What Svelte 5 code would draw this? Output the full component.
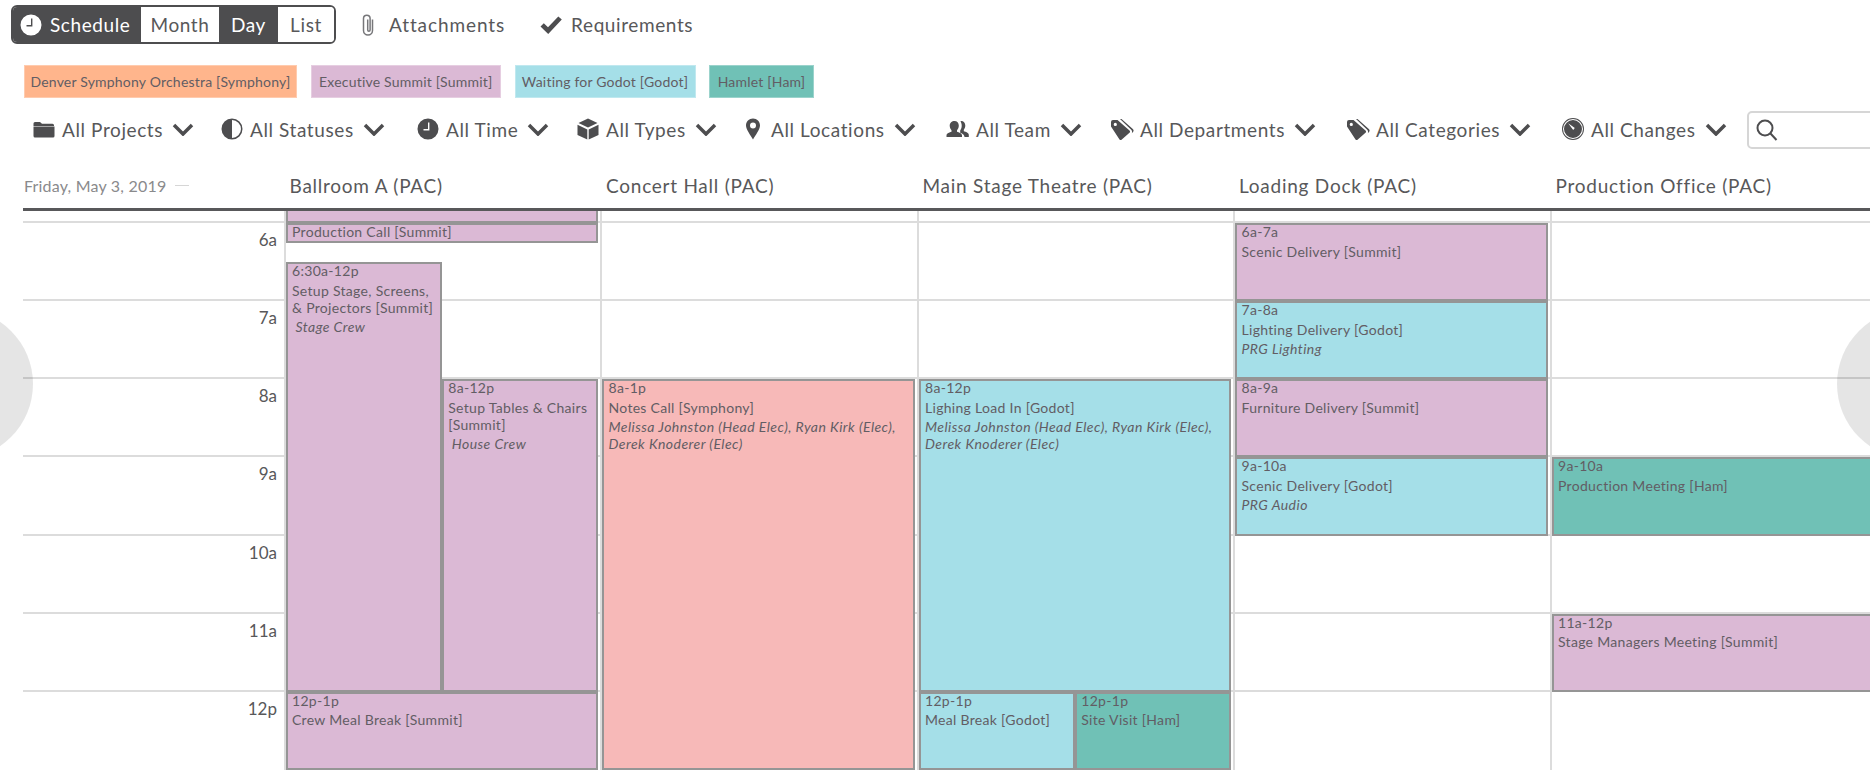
<script>
  const ICONS = {
    clock: 'M12 1.5a10.5 10.5 0 1 0 0 21 10.5 10.5 0 0 0 0-21z M12 5.5h1.4v7.9H7.5V12H12z',
    half: 'M12 1.5a10.5 10.5 0 1 0 0 21 10.5 10.5 0 0 0 0-21z M12 3a9 9 0 0 1 0 18z',
    folder: 'M1.500 6.500q0-1.500 1.500-1.500h5l2 1.800h10.500q1.500 0 1.500 1.500v.7H1.500z M1.500 9.500h21V19q0 1.500-1.500 1.500H3q-1.500 0-1.500-1.500z',
    cube: 'M12 1.500 21.500 6 12 10.500 2.500 6z M1.500 7.800l9.800 4.600v10.100L1.500 18z M22.500 7.800l-9.800 4.600v10.100l9.800-4.500z',
    pin: 'M12 1.500c-4 0-7 3-7 7 0 4 4.500 9.500 7 14 2.500-4.500 7-10 7-14 0-4-3-7-7-7z M12 5.500a3 3 0 1 1 0 6 3 3 0 0 1 0-6z',
    team: 'M8.500 4c2.600 0 4.300 2 4.300 4.600 0 2-.8 3.600-1.800 4.600v1.600c2 .8 5 1.500 5 3.700V20H.5v-1.500c0-2.200 3-2.900 5-3.700v-1.600c-1-1-1.800-2.600-1.800-4.600C3.700 6 5.900 4 8.500 4z M14.500 4.200c2.500-.6 4.800 1.400 4.800 4.400 0 1.700-.6 3.100-1.500 4.100v1.600c2 .7 5 1.300 5 3.600V20h-4.300c0-2.600-2.500-3.600-4.300-4.300v-2.200c1-1.300 1.500-3 1.500-4.900 0-1.800-.6-3.300-1.200-4.400z',
    tags: 'M1 9.500V5q0-2 2-2h4.500l12 10.500q1.200 1.200 0 2.300L11.800 22.500q-1.200 1-2.300 0z M5.300 5.800a1.600 1.600 0 1 0 0 3.200 1.600 1.600 0 0 0 0-3.200z M10 2h1.500l11.300 10q1.500 1.500.2 3l-1.200 1.200q.8-2-.6-3.400z',
    changes: 'M12 1a11 11 0 1 0 0 22 11 11 0 0 0 0-22z M12 2a10 10 0 1 1 0 20 10 10 0 0 1 0-20z M12 3a9 9 0 1 0 0 18 9 9 0 0 0 0-18z M7.200 6.200l6.600 4.800-1.600 1.900z',
    check: 'M1.500 13.500l3.300-3.300 4.200 4L19.300 3.500l3.500 3L9.200 21z'
  };

  const filters = [
    { icon: 'folder', label: 'All Projects' },
    { icon: 'half', label: 'All Statuses' },
    { icon: 'clock', label: 'All Time' },
    { icon: 'cube', label: 'All Types' },
    { icon: 'pin', label: 'All Locations' },
    { icon: 'team', label: 'All Team' },
    { icon: 'tags', label: 'All Departments' },
    { icon: 'tags', label: 'All Categories' },
    { icon: 'changes', label: 'All Changes' }
  ];

  const chips = [
    { label: 'Denver Symphony Orchestra [Symphony]', cls: 'orange' },
    { label: 'Executive Summit [Summit]', cls: 'summit' },
    { label: 'Waiting for Godot [Godot]', cls: 'godot' },
    { label: 'Hamlet [Ham]', cls: 'ham' }
  ];

  const hours = ['6a', '7a', '8a', '9a', '10a', '11a', '12p'];
  const HOUR = 78.15;
  const ORIGIN = 12;

  const columns = [
    {
      name: 'Ballroom A (PAC)',
      events: [
        { start: 5, dur: 1, cls: 'summit' },
        { start: 6, dur: 0.25, cls: 'summit', title: 'Production Call [Summit]' },
        { start: 6.5, dur: 5.5, cls: 'summit', lane: 0, lanes: 2, time: '6:30a-12p', title: 'Setup Stage, Screens, & Projectors [Summit]', crew: 'Stage Crew', indent: true },
        { start: 8, dur: 4, cls: 'summit', lane: 1, lanes: 2, time: '8a-12p', title: 'Setup Tables & Chairs [Summit]', crew: 'House Crew', indent: true },
        { start: 12, dur: 1, cls: 'summit', time: '12p-1p', title: 'Crew Meal Break [Summit]' }
      ]
    },
    {
      name: 'Concert Hall (PAC)',
      events: [
        { start: 8, dur: 5, cls: 'pink', time: '8a-1p', title: 'Notes Call [Symphony]', crew: 'Melissa Johnston (Head Elec), Ryan Kirk (Elec), Derek Knoderer (Elec)' }
      ]
    },
    {
      name: 'Main Stage Theatre (PAC)',
      events: [
        { start: 8, dur: 4, cls: 'godot', time: '8a-12p', title: 'Lighing Load In [Godot]', crew: 'Melissa Johnston (Head Elec), Ryan Kirk (Elec), Derek Knoderer (Elec)' },
        { start: 12, dur: 1, cls: 'godot', lane: 0, lanes: 2, time: '12p-1p', title: 'Meal Break [Godot]' },
        { start: 12, dur: 1, cls: 'ham', lane: 1, lanes: 2, time: '12p-1p', title: 'Site Visit [Ham]' }
      ]
    },
    {
      name: 'Loading Dock (PAC)',
      events: [
        { start: 6, dur: 1, cls: 'summit', time: '6a-7a', title: 'Scenic Delivery [Summit]' },
        { start: 7, dur: 1, cls: 'godot', time: '7a-8a', title: 'Lighting Delivery [Godot]', crew: 'PRG Lighting' },
        { start: 8, dur: 1, cls: 'summit', time: '8a-9a', title: 'Furniture Delivery [Summit]' },
        { start: 9, dur: 1, cls: 'godot', time: '9a-10a', title: 'Scenic Delivery [Godot]', crew: 'PRG Audio' }
      ]
    },
    {
      name: 'Production Office (PAC)',
      events: [
        { start: 9, dur: 1, cls: 'ham', time: '9a-10a', title: 'Production Meeting [Ham]' },
        { start: 11, dur: 1, cls: 'summit', time: '11a-12p', title: 'Stage Managers Meeting [Summit]' }
      ]
    }
  ];

  function place(ev) {
    const lanes = ev.lanes ?? 1;
    const lane = ev.lane ?? 0;
    return `top:${ORIGIN + (ev.start - 6) * HOUR}px;height:${ev.dur * HOUR}px;left:${(lane / lanes) * 100}%;width:${100 / lanes}%`;
  }
</script>

{#snippet icon(name)}
  <svg class="icon" viewBox="0 0 24 24" aria-hidden="true"><path d={ICONS[name]} fill-rule="evenodd" /></svg>
{/snippet}

<div class="page">
  <div class="toolbar">
    <div class="segments">
      <button class="seg dark schedule"><svg class="icon white" viewBox="0 0 24 24"><path d={ICONS.clock} fill-rule="evenodd" /></svg>Schedule</button>
      <button class="seg month">Month</button>
      <button class="seg dark day">Day</button>
      <button class="seg list">List</button>
    </div>
    <div class="tool attachments">
      <svg class="icon line thin" viewBox="0 0 24 24"><path d="M16.500 6.500v11a4.500 4.500 0 0 1-9 0V5.500a3.300 3.300 0 0 1 6.600 0V17a1.200 1.200 0 0 1-2.400 0V6.500" /></svg>
      Attachments
    </div>
    <div class="tool requirements">
      {@render icon('check')}
      Requirements
    </div>
  </div>

  <div class="legend">
    {#each chips as chip}
      <span class="chip {chip.cls}">{chip.label}</span>
    {/each}
  </div>

  <div class="filters">
    {#each filters as f}
      <div class="filter">
        {@render icon(f.icon)}
        <span>{f.label}</span>
        <svg class="chev" viewBox="0 0 22 13"><path d="M2 2l9 9 9-9" /></svg>
      </div>
    {/each}
    <div class="search">
      <svg class="icon line" viewBox="0 0 24 24"><circle cx="10" cy="10" r="7.500" /><path d="M15.500 15.500 21.500 22" /></svg>
    </div>
  </div>

  <div class="head">
    <div class="date">Friday, May 3, 2019<i class="dash"></i></div>
    {#each columns as col}
      <div class="colname">{col.name}</div>
    {/each}
  </div>

  <div class="body">
    <div class="lines">
      {#each hours as h}
        <div class="hour"><span>{h}</span></div>
      {/each}
    </div>
    <div class="cols">
      <div class="gutter"></div>
      {#each columns as col}
        <div class="col">
          <div class="lane">
            {#each col.events as ev}
              <div class="event {ev.cls}" style={place(ev)}>
                {#if ev.time}<div class="time">{ev.time}</div>{/if}
                {#if ev.title}<div class="title">{ev.title}</div>{/if}
                {#if ev.crew}<div class="crew" class:indent={ev.indent}>{ev.crew}</div>{/if}
              </div>
            {/each}
          </div>
        </div>
      {/each}
    </div>
  </div>

  <div class="nav prev"></div>
  <div class="nav next"></div>
</div>

<style>
  :global(body) {
    margin: 0;
    background: #fff;
  }
  .page {
    position: relative;
    width: 1870px;
    height: 770px;
    overflow: hidden;
    font-family: Lato, "Noto Sans", sans-serif;
    color: #58585a;
    background: #fff;
  }
  .icon {
    width: 24px;
    height: 24px;
    flex: none;
    fill: #4d4d4f;
  }
  .icon.white {
    fill: #fff;
  }
  .icon.line {
    fill: none;
    stroke: #4d4d4f;
    stroke-width: 2;
  }
  .icon.thin {
    stroke: #77777a;
    stroke-width: 1.500;
  }

  .toolbar {
    display: flex;
    align-items: center;
    height: 39px;
    padding: 5px 0 0 11px;
    font-size: 19px;
    letter-spacing: 0.6px;
  }
  .segments {
    display: flex;
    width: 325px;
    height: 39px;
    box-sizing: border-box;
    border: 2px solid #4d4d4f;
    border-radius: 6px;
    overflow: hidden;
  }
  .seg {
    display: flex;
    align-items: center;
    justify-content: center;
    height: 100%;
    padding: 0;
    border: 0;
    background: #fff;
    color: #58585a;
    font: inherit;
    letter-spacing: inherit;
  }
  .seg.dark {
    background: #4d4d4f;
    color: #fff;
  }
  .schedule {
    width: 128px;
    gap: 7px;
    justify-content: flex-start;
    padding-left: 6px;
  }
  .month {
    width: 78px;
  }
  .day {
    width: 59px;
  }
  .list {
    flex: 1;
  }
  .tool {
    display: flex;
    align-items: center;
  }
  .attachments {
    margin-left: 20px;
    gap: 9px;
    letter-spacing: 0.9px;
  }
  .requirements {
    margin-left: 34px;
    gap: 8px;
  }

  .legend {
    display: flex;
    gap: 13.500px;
    height: 33px;
    margin: 21px 0 0 24px;
  }
  .chip {
    display: flex;
    align-items: center;
    justify-content: center;
    box-sizing: border-box;
    font-size: 14px;
    letter-spacing: 0.2px;
    color: #625d64;
    border: 1px solid rgba(255, 255, 255, 0.3);
  }
  .chip:nth-child(1) {
    width: 273px;
  }
  .chip:nth-child(2) {
    width: 190.500px;
  }
  .chip:nth-child(3) {
    width: 181px;
  }
  .chip:nth-child(4) {
    width: 105px;
  }
  .orange {
    background: #ffb58c;
  }
  .summit {
    background: #dbb9d5;
  }
  .godot {
    background: #a5dfe8;
  }
  .ham {
    background: #70c1b6;
  }
  .pink {
    background: #f7b9b8;
  }

  .filters {
    display: grid;
    grid-template-columns: 188px 196px 160px 165px 205px 164px 236px 215px 186px 1fr;
    align-items: center;
    height: 38px;
    margin-top: 13px;
    padding-left: 32px;
    font-size: 19px;
    letter-spacing: 0.6px;
  }
  .filter {
    display: flex;
    align-items: center;
    gap: 6px;
    padding-bottom: 2px;
  }
  .chev {
    width: 22px;
    height: 13px;
    margin-left: 3px;
    fill: none;
    stroke: #4d4d4f;
    stroke-width: 3.500;
  }
  .search {
    display: flex;
    align-items: center;
    height: 38px;
    box-sizing: border-box;
    margin-right: -10px;
    padding-left: 6px;
    border: 2px solid #d6d6d6;
    border-radius: 5px;
  }

  .head {
    display: grid;
    grid-template-columns: 261px repeat(5, 316.500px);
    align-items: center;
    height: 62px;
    margin-left: 23px;
    box-sizing: border-box;
    padding-top: 14px;
    border-bottom: 3px solid #58585a;
    font-size: 19px;
    letter-spacing: 0.75px;
    white-space: nowrap;
  }
  .date {
    display: flex;
    align-items: center;
    gap: 9px;
    margin-left: 1px;
    font-size: 16px;
    letter-spacing: 0.2px;
    color: #8a8a8c;
  }
  .dash {
    width: 14px;
    height: 1px;
    background: #d6d6d6;
  }
  .colname {
    padding-left: 5.500px;
  }

  .body {
    position: relative;
    height: 559px;
    overflow: hidden;
  }
  .lines {
    margin: 10px 0 0 23px;
  }
  .hour {
    height: 78.150px;
    box-sizing: border-box;
    border-top: 2px solid #dcdcdc;
    font-size: 17px;
    line-height: 33px;
  }
  .hour span {
    display: block;
    width: 254px;
    text-align: right;
  }
  .cols {
    position: absolute;
    inset: 0 0 0 23px;
    display: grid;
    grid-template-columns: 260.500px repeat(4, 316.500px) 340px;
  }
  .col {
    padding-right: 2px;
    border-left: 2px solid #dcdcdc;
    box-sizing: border-box;
  }
  .lane {
    position: relative;
    height: 100%;
  }
  .event {
    position: absolute;
    box-sizing: border-box;
    border: 2px solid #959595;
    padding: 0 4px 0 4.500px;
    overflow: hidden;
    font-size: 14px;
    line-height: 17px;
    letter-spacing: 0.3px;
    color: #625d64;
  }
  .time {
    margin-top: -2px;
  }
  .title {
    margin-top: 2.500px;
  }
  .title:first-child {
    margin-top: -2px;
  }
  .crew {
    margin-top: 2.500px;
    font-style: italic;
    letter-spacing: 0.45px;
  }
  .crew.indent {
    padding-left: 3.500px;
  }

  .nav {
    position: absolute;
    top: 309px;
    width: 150px;
    height: 150px;
    border-radius: 50%;
    background: rgba(0, 0, 0, 0.1);
  }
  .prev {
    left: -117px;
  }
  .next {
    left: 1837px;
  }
</style>
